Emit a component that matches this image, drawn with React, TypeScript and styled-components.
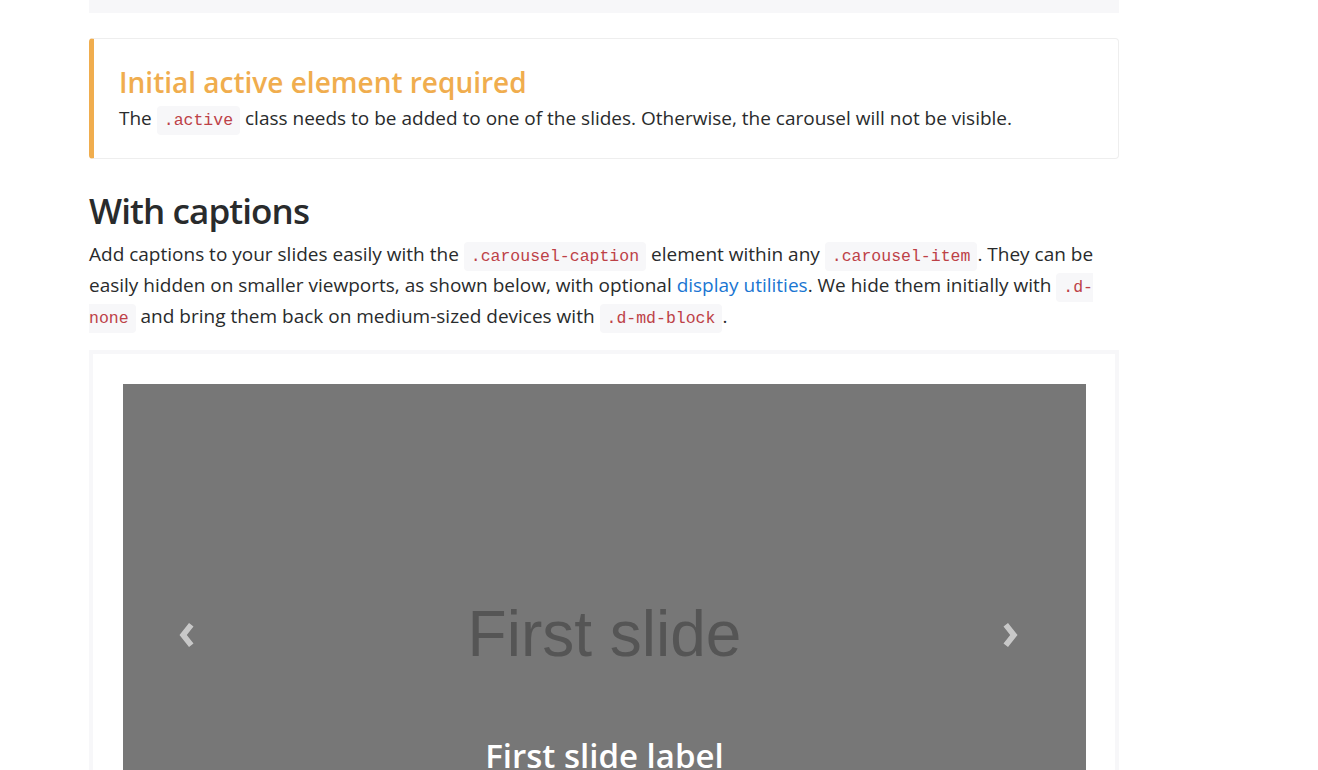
import React from "react";
import styled, { createGlobalStyle } from "styled-components";

const GlobalStyle = createGlobalStyle`
  html, body { margin: 0; padding: 0; background: #fff; }
  body {
    font-family: "Open Sans", "Noto Sans", sans-serif;
    font-size: 19px;
    line-height: 31px;
    color: #292b2c;
    overflow: hidden;
  }
`;

const Page = styled.main`
  width: 1030px;
  margin-left: 89px;
`;

const TopBlock = styled.div`
  height: 13px;
  background: #f7f7f9;
`;

const Callout = styled.section`
  margin-top: 25px;
  border: 1px solid #eee;
  border-left: 5px solid #f0ad4e;
  border-radius: 4px;
  padding: 28px 25px 24px 25px;
`;

const CalloutTitle = styled.h4`
  margin: 0 0 5px;
  font-size: 28px;
  line-height: 31px;
  font-weight: 600;
  color: #f0ad4e;
`;

const Text = styled.p`
  margin: 0 0 18px;
  &:last-child { margin-bottom: 0; }
`;

const Code = styled.code`
  font-family: "Liberation Mono", "DejaVu Sans Mono", monospace;
  font-size: 16.5px;
  line-height: 1;
  color: #bd4147;
  background: #f7f7f9;
  padding: 5px 7px;
  border-radius: 4px;
`;

const Link = styled.a`
  color: #1a76d2;
  text-decoration: none;
`;

const SectionTitle = styled.h2`
  margin: 30px 0 6px;
  font-size: 35px;
  line-height: 44px;
  letter-spacing: -0.9px;
  font-weight: 600;
  color: #292b2c;
`;

const Example = styled.div`
  border: 4px solid #f7f7f9;
  border-bottom: none;
  padding: 30px 29px 0 30px;
`;

const Carousel = styled.div`
  position: relative;
  height: 481px;
  background: #777;
  overflow: hidden;
`;

const SlideText = styled.div`
  height: 100%;
  display: flex;
  align-items: center;
  justify-content: center;
  padding-top: 20px;
  box-sizing: border-box;
  font-family: "Liberation Sans", Arial, sans-serif;
  font-size: 64px;
  color: #555;
`;

const Control = styled.a<{ $side: "left" | "right"; $shift: number }>`
  position: absolute;
  top: 0;
  bottom: 0;
  ${(p) => (p.$side === "left" ? "left: 0;" : "right: 0;")}
  width: 15%;
  display: flex;
  align-items: center;
  justify-content: center;
  opacity: 0.6;
  padding-top: 20px;
  box-sizing: border-box;
  svg { display: block; margin-left: ${(p) => p.$shift}px; }
`;

const Caption = styled.div`
  position: absolute;
  left: 15%;
  right: 15%;
  top: 352px;
  text-align: center;
  color: #fff;
`;

const CaptionTitle = styled.h3`
  margin: 0 0 8px;
  font-size: 33px;
  line-height: 40px;
  font-weight: 600;
`;

const CaptionText = styled.p`
  margin: 0;
`;

const PrevIcon = () => (
  <svg width="16" height="26" viewBox="0 0 16 26">
    <path d="M10 1 L0.5 13 L10 25 L14.5 21.5 L7.8 13 L14.5 4.5 Z" fill="#fff" />
  </svg>
);

const NextIcon = () => (
  <svg width="16" height="26" viewBox="0 0 16 26">
    <path d="M6 1 L15.5 13 L6 25 L1.5 21.5 L8.2 13 L1.5 4.5 Z" fill="#fff" />
  </svg>
);

export default function App() {
  return (
    <>
      <GlobalStyle />
      <Page>
        <TopBlock />
        <Callout>
          <CalloutTitle>Initial active element required</CalloutTitle>
          <Text>
            The <Code>.active</Code> class needs to be added to one of the slides. Otherwise, the carousel will not be visible.
          </Text>
        </Callout>
        <SectionTitle>With captions</SectionTitle>
        <Text>
          Add captions to your slides easily with the <Code>.carousel-caption</Code> element within any{" "}
          <Code>.carousel-item</Code>. They can be easily hidden on smaller viewports, as shown below, with optional{" "}
          <Link href="#">display utilities</Link>. We hide them initially with <Code>.d-none</Code> and bring them back on
          medium-sized devices with <Code>.d-md-block</Code>.
        </Text>
        <Example>
          <Carousel>
            <SlideText>First slide</SlideText>
            <Control $side="left" $shift={-16} href="#">
              <PrevIcon />
            </Control>
            <Control $side="right" $shift={-8} href="#">
              <NextIcon />
            </Control>
            <Caption>
              <CaptionTitle>First slide label</CaptionTitle>
              <CaptionText>Nulla vitae elit libero, a pharetra augue mollis interdum.</CaptionText>
            </Caption>
          </Carousel>
        </Example>
      </Page>
    </>
  );
}
